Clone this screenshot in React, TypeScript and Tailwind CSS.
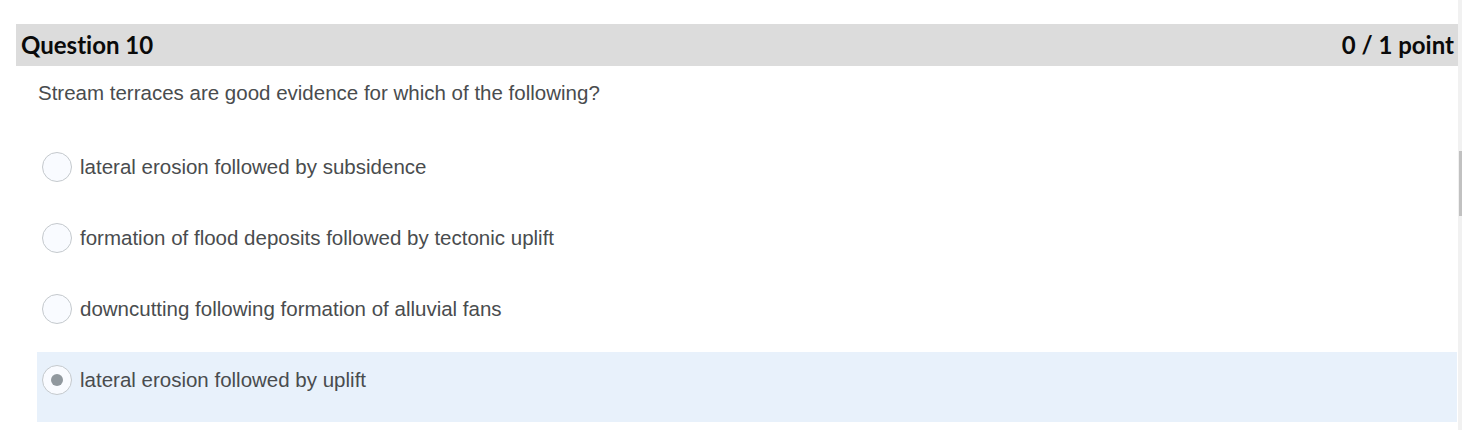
const options = [
  { label: "lateral erosion followed by subsidence", selected: false },
  { label: "formation of flood deposits followed by tectonic uplift", selected: false },
  { label: "downcutting following formation of alluvial fans", selected: false },
  { label: "lateral erosion followed by uplift", selected: true },
];

function Radio({ checked }: { checked: boolean }) {
  return (
    <span className="flex h-[30px] w-[30px] shrink-0 items-center justify-center rounded-full border border-[#c4c9cd] bg-[#f9fbff]">
      {checked && <span className="h-[12px] w-[12px] rounded-full bg-[#90989e]" />}
    </span>
  );
}

export default function App() {
  return (
    <div className="flex h-[430px] w-[1462px] overflow-hidden bg-white">
      <div className="w-[1458px] pl-4 pt-6">
        <div className="flex h-[42px] items-center justify-between bg-[#dcdcdc] pb-px pl-[5px] pr-[4px] font-['Lato',sans-serif] text-[24px] font-bold text-[#0a0a0a] [font-variant-ligatures:none]">
          <h2>Question 10</h2>
          <span>0 / 1 point</span>
        </div>

        <div className="pl-[21px] pr-px font-['Liberation_Sans',Arial,sans-serif] text-[20.5px] text-[#494c4e]">
          <p className="mt-[13px] pl-px leading-[27px]">
            Stream terraces are good evidence for which of the following?
          </p>

          <ul className="mt-[33px] flex flex-col gap-px">
            {options.map((o) => (
              <li
                key={o.label}
                className={
                  "flex h-[70px] items-start gap-2 pl-[5px] pt-[13px] " +
                  (o.selected ? "bg-[#e8f1fb]" : "")
                }
              >
                <Radio checked={o.selected} />
                <span className="leading-[30px]">{o.label}</span>
              </li>
            ))}
          </ul>
        </div>
      </div>

      <div className="relative w-[4px] bg-[#f1f1f1]">
        <div className="absolute left-px top-[151px] h-[65px] w-[3px] bg-[#c1c1c1]" />
      </div>
    </div>
  );
}
